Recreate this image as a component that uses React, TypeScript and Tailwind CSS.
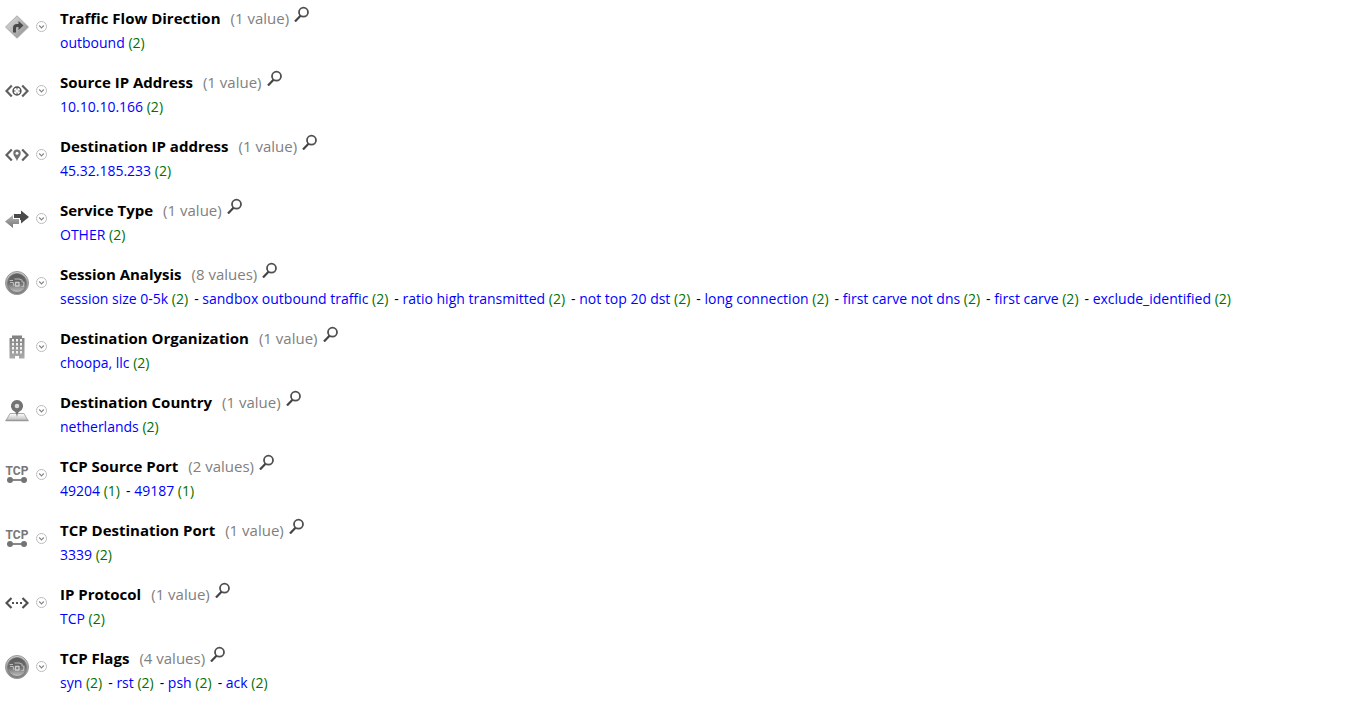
import React from "react";

const SignIcon = () => (
    <svg width="24" height="24" viewBox="0 0 24 24">
        <defs>
            <linearGradient id="sign" x1="0" y1="0" x2="1" y2="1">
                <stop offset="0" stopColor="#e2e2e2" />
                <stop offset="1" stopColor="#8a8a8a" />
            </linearGradient>
        </defs>
        <path d="M12 .8 23.500 12 12 23.2.5 12z" fill="url(#sign)" stroke="#aaa" strokeWidth="1" strokeLinejoin="round" />
        <path d="M9.500 17.500V13q0-2.500 2.500-2.500h3" fill="none" stroke="#4a4a4a" strokeWidth="3" />
        <path d="M13.500 6v9l5-4.500z" fill="#4a4a4a" />
    </svg>
);

const Brackets = () => (
    <path d="M6.800 6.500 1.500 12l5.300 5.500M17.200 6.500l5.300 5.500-5.300 5.500" fill="none" stroke="#606060" strokeWidth="2.200" />
);

const SourceIcon = () => (
    <svg width="24" height="24" viewBox="0 0 24 24">
        <Brackets />
        <circle cx="12" cy="12" r="3.900" fill="#fff" stroke="#505050" strokeWidth="1.500" />
        <path d="M12 8v2.500M12 13.500v2.500M8 12h2.500M13.500 12h2.500" stroke="#505050" strokeWidth="1" />
    </svg>
);

const DestinationIcon = () => (
    <svg width="24" height="24" viewBox="0 0 24 24">
        <Brackets />
        <path d="M12 18.500c-.5-3-3.700-5.200-3.700-8.200a3.700 3.700 0 0 1 7.400 0c0 3-3.200 5.200-3.700 8.200z" fill="#707070" />
        <circle cx="12" cy="10.300" r="1.500" fill="#fff" />
    </svg>
);

const ServiceIcon = () => (
    <svg width="24" height="24" viewBox="0 0 24 24">
        <defs>
            <linearGradient id="service" x1="0" y1="0" x2="0" y2="1">
                <stop offset="0" stopColor="#b5b5b5" />
                <stop offset="1" stopColor="#777" />
            </linearGradient>
        </defs>
        <path d="M8.500 7H16V3.500l8 6.500-8 6.500V13H8.500z" fill="#4a4a4a" />
        <path d="M15 11H9V7L-.5 14l9.500 7.500v-4h6z" fill="#fff" />
        <path d="M14 12H8V8L0 14.500 8 21v-4h6z" fill="url(#service)" />
    </svg>
);

const BadgeIcon = () => (
    <svg width="24" height="24" viewBox="0 0 24 24">
        <defs>
            <linearGradient id="ring" x1="0" y1="0" x2="0" y2="1">
                <stop offset="0" stopColor="#d2d2d2" />
                <stop offset="1" stopColor="#777" />
            </linearGradient>
            <linearGradient id="disc" x1="0" y1="0" x2="0" y2="1">
                <stop offset="0" stopColor="#5c5c5c" />
                <stop offset=".5" stopColor="#6a6a6a" />
                <stop offset="1" stopColor="#c4c4c4" />
            </linearGradient>
        </defs>
        <circle cx="12" cy="12" r="11.500" fill="url(#ring)" stroke="#999" />
        <circle cx="12" cy="12" r="9.500" fill="url(#disc)" stroke="#777" strokeWidth=".8" />
        <path d="M4.500 9.500h3.500M9.500 8h5l3 1.500M5 11.500h3l1 3.500M16.500 10.500l2.500 1-.5 4h-2" fill="none" stroke="#bbb" strokeWidth="1.200" />
        <path d="M10.500 11.500v3.500h3.500v-3.500z" fill="none" stroke="#ccc" strokeWidth="1.300" strokeLinejoin="round" />
    </svg>
);

const BuildingIcon = () => (
    <svg width="24" height="24" viewBox="0 0 24 24">
        <defs>
            <linearGradient id="building" x1="0" y1="0" x2="0" y2="1">
                <stop offset="0" stopColor="#808080" />
                <stop offset="1" stopColor="#aaa" />
            </linearGradient>
        </defs>
        <path d="M7 .5h10V3h2.500v20.500H14V21h-4v2.500H4.500V3H7z" fill="url(#building)" />
        <path d="M8 4v16M12 4v16M16 4v16" stroke="#f2f2f2" strokeWidth="2" strokeDasharray="2.500 1.500" />
    </svg>
);

const MapPinIcon = () => (
    <svg width="24" height="24" viewBox="0 0 24 24">
        <defs>
            <linearGradient id="land" x1="0" y1="0" x2="0" y2="1">
                <stop offset="0" stopColor="#fff" />
                <stop offset="1" stopColor="#bbb" />
            </linearGradient>
        </defs>
        <path d="M5 14.500h14l4 7H1z" fill="url(#land)" stroke="#aaa" strokeWidth="1" />
        <path d="M.5 21.500h23" stroke="#999" strokeWidth="1.500" />
        <path d="M12 18c-.7-3-1-4.500-2.500-5.500a6 6 0 1 1 5 0c-1.500 1-1.800 2.500-2.500 5.500z" fill="#737373" />
        <circle cx="12" cy="7" r="2.300" fill="#ddd" />
    </svg>
);

const TcpIcon = () => (
    <svg width="24" height="24" viewBox="0 0 24 24">
        <text x="12" y="12" textAnchor="middle" fontFamily="Roboto, sans-serif" fontSize="12" fontWeight="700" fill="#777">
            TCP
        </text>
        <path d="M5 17h14" stroke="#888" strokeWidth="2" />
        <circle cx="5" cy="17" r="3" fill="#747474" />
        <circle cx="19" cy="17" r="3" fill="#747474" />
    </svg>
);

const ProtocolIcon = () => (
    <svg width="24" height="24" viewBox="0 0 24 24">
        <path d="M6.500 7 1.500 12l5 5M17.500 7l5 5-5 5" fill="none" stroke="#505050" strokeWidth="2.200" />
        <path d="M7 11h2v2H7zM11 11h2v2h-2zM15 11h2v2h-2z" fill="#505050" />
    </svg>
);

const ChevronIcon = () => (
    <svg width="11" height="11" viewBox="0 0 11 11">
        <circle cx="5.500" cy="5.500" r="5" fill="#fff" stroke="#bbb" />
        <path d="M3.200 4.500l2.300 2.300 2.300-2.300" fill="none" stroke="#888" strokeWidth="1.200" />
    </svg>
);

const SearchIcon = () => (
    <svg width="16" height="16" viewBox="0 0 16 16">
        <circle cx="9.500" cy="6.200" r="4.500" fill="none" stroke="#505050" strokeWidth="1.800" />
        <path d="M6.500 9.700 1 15.500" stroke="#444" strokeWidth="2.200" />
    </svg>
);

const metaGroups = [
    { icon: SignIcon, name: "Traffic Flow Direction", values: [["outbound", 2]] },
    { icon: SourceIcon, name: "Source IP Address", values: [["10.10.10.166", 2]] },
    { icon: DestinationIcon, name: "Destination IP address", values: [["45.32.185.233", 2]] },
    { icon: ServiceIcon, name: "Service Type", values: [["OTHER", 2]] },
    {
        icon: BadgeIcon,
        name: "Session Analysis",
        values: [
            ["session size 0-5k", 2],
            ["sandbox outbound traffic", 2],
            ["ratio high transmitted", 2],
            ["not top 20 dst", 2],
            ["long connection", 2],
            ["first carve not dns", 2],
            ["first carve", 2],
            ["exclude_identified", 2],
        ],
    },
    { icon: BuildingIcon, name: "Destination Organization", values: [["choopa, llc", 2]] },
    { icon: MapPinIcon, name: "Destination Country", values: [["netherlands", 2]] },
    { icon: TcpIcon, name: "TCP Source Port", values: [["49204", 1], ["49187", 1]] },
    { icon: TcpIcon, name: "TCP Destination Port", values: [["3339", 2]] },
    { icon: ProtocolIcon, name: "IP Protocol", values: [["TCP", 2]] },
    { icon: BadgeIcon, name: "TCP Flags", values: [["syn", 2], ["rst", 2], ["psh", 2], ["ack", 2]] },
];

const App = () => {
    return (
        <main className="bg-white pt-1.5 font-['Open_Sans',sans-serif]">
            <ul className="space-y-3.5">
                {metaGroups.map(({ icon: Icon, name, values }) => (
                    <li key={name} className="flex items-start pl-[5px]">
                        <div className="flex w-[55px] shrink-0 items-start gap-[7px] pt-[9px]">
                            <Icon />
                            <button type="button" aria-label={`${name} options`} className="pt-1.5">
                                <ChevronIcon />
                            </button>
                        </div>

                        <div>
                            <div className="flex h-6 text-[15px] leading-6">
                                <h2 className="font-bold text-black">{name}</h2>
                                <span className="ml-2.5 text-[#808080]">
                                    ({values.length} {values.length === 1 ? "value" : "values"})
                                </span>
                                <button type="button" aria-label={`Search ${name}`} className="ml-[5px] self-start">
                                    <SearchIcon />
                                </button>
                            </div>

                            <div className="flex flex-wrap text-sm leading-[26px]">
                                {values.map(([value, count], i) => (
                                    <span key={value} className="mr-1.5 whitespace-nowrap text-black">
                                        {i > 0 && "- "}
                                        <a href="#" className="text-[#0000ff]">{value}</a>{" "}
                                        <span className="text-[#007000]">({count})</span>
                                    </span>
                                ))}
                            </div>
                        </div>
                    </li>
                ))}
            </ul>
        </main>
    );
};

export default App;
